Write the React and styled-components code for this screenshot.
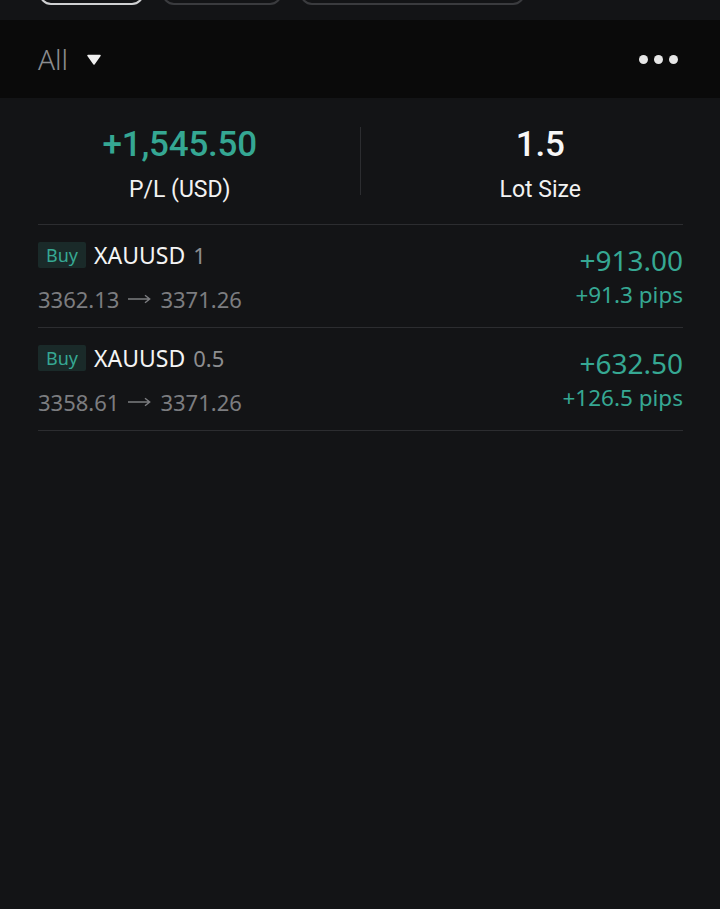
import React from "react";
import styled, { createGlobalStyle } from "styled-components";

const GlobalStyle = createGlobalStyle`
  html, body {
    margin: 0;
    padding: 0;
    background: #131416;
  }
  body {
    font-family: Roboto, "Noto Sans", sans-serif;
  }
`;

const Page = styled.div`
  width: 720px;
  min-height: 909px;
  background: #131416;
  color: #f2f2f2;
`;

const TabStrip = styled.div`
  height: 20px;
  display: flex;
  gap: 18px;
  padding: 0 39px;
  overflow: hidden;
`;

const Tab = styled.div`
  width: ${(p) => p.w}px;
  height: 24px;
  margin-top: -19px;
  border: 2px solid ${(p) => (p.active ? "#cfd0d2" : "#3a3b3e")};
  border-radius: 12px;
  box-sizing: border-box;
`;

const FilterBar = styled.div`
  height: 78px;
  background: #0a0a0a;
  display: flex;
  align-items: center;
  justify-content: space-between;
  padding: 0 42px 0 38px;
`;

const FilterLabel = styled.div`
  display: flex;
  align-items: center;
  gap: 19px;
  color: #8b8c8e;
  font-family: "Noto Sans", sans-serif;
  font-size: 28px;
  font-weight: 300;
`;

const Dots = styled.div`
  display: flex;
  gap: 6px;
  span {
    width: 9px;
    height: 9px;
    border-radius: 50%;
    background: #e6e6e6;
  }
`;

const Summary = styled.div`
  display: grid;
  grid-template-columns: 1fr 1px 1fr;
  align-items: start;
  padding: 28px 0 20px;
`;

const Stat = styled.div`
  display: flex;
  flex-direction: column;
  align-items: center;
  gap: 12px;
`;

const StatValue = styled.div`
  font-size: 35px;
  font-weight: 500;
  line-height: 38px;
  letter-spacing: -0.2px;
  color: ${(p) => (p.green ? "#35a793" : "#f7f7f7")};
`;

const StatLabel = styled.div`
  font-size: 23px;
  line-height: 28px;
  color: #f2f2f2;
`;

const VDivider = styled.div`
  width: 1px;
  height: 68px;
  margin-top: 1px;
  background: #2c2d30;
`;

const List = styled.div`
  margin: 0 37px 0 38px;
  border-top: 1px solid #2c2d30;
  font-family: "Noto Sans", sans-serif;
`;

const Row = styled.div`
  display: flex;
  justify-content: space-between;
  align-items: flex-start;
  padding: 17px 0 15px;
  border-bottom: 1px solid #2c2d30;
`;

const Left = styled.div`
  display: flex;
  flex-direction: column;
  gap: 18px;
`;

const Title = styled.div`
  display: flex;
  align-items: center;
  gap: 8px;
  font-size: 23px;
  line-height: 26px;
`;

const Badge = styled.span`
  background: #1a2a29;
  color: #36a893;
  font-size: 18px;
  line-height: 26px;
  padding: 0 8px;
  border-radius: 2px;
`;

const Symbol = styled.span`
  color: #f4f4f4;
`;

const Size = styled.span`
  color: #8d8e90;
  font-size: 22px;
`;

const Prices = styled.div`
  display: flex;
  align-items: center;
  gap: 9px;
  color: #7c7d80;
  font-size: 22px;
  line-height: 26px;
`;

const Right = styled.div`
  display: flex;
  flex-direction: column;
  align-items: flex-end;
  gap: 5px;
  padding-top: 2px;
`;

const Profit = styled.div`
  color: #36a893;
  font-size: 28px;
  line-height: 32px;
`;

const Pips = styled.div`
  color: #36a893;
  font-size: 22.5px;
  line-height: 28px;
`;

const trades = [
  { size: "1", open: "3362.13", close: "3371.26", profit: "+913.00", pips: "+91.3 pips" },
  { size: "0.5", open: "3358.61", close: "3371.26", profit: "+632.50", pips: "+126.5 pips" },
];

const Arrow = () => (
  <svg width="23" height="10" viewBox="0 0 23 10">
    <path d="M0 5 H21.5 M17 1.2 L21.7 5 L17 8.8" fill="none" stroke="#7c7d80" strokeWidth="1.4" />
  </svg>
);

export default function App() {
  return (
    <Page>
      <GlobalStyle />
      <TabStrip>
        <Tab w={105} active />
        <Tab w={120} />
        <Tab w={225} />
      </TabStrip>
      <FilterBar>
        <FilterLabel>
          All
          <svg width="14" height="11" viewBox="0 0 14 11">
            <path d="M1 1.5 H13 L7 10 Z" fill="#f0f0f0" stroke="#f0f0f0" strokeWidth="1.5" strokeLinejoin="round" />
          </svg>
        </FilterLabel>
        <Dots>
          <span />
          <span />
          <span />
        </Dots>
      </FilterBar>
      <Summary>
        <Stat>
          <StatValue green>+1,545.50</StatValue>
          <StatLabel>P/L (USD)</StatLabel>
        </Stat>
        <VDivider />
        <Stat>
          <StatValue>1.5</StatValue>
          <StatLabel>Lot Size</StatLabel>
        </Stat>
      </Summary>
      <List>
        {trades.map((t, i) => (
          <Row key={i}>
            <Left>
              <Title>
                <Badge>Buy</Badge>
                <Symbol>XAUUSD</Symbol>
                <Size>{t.size}</Size>
              </Title>
              <Prices>
                {t.open}
                <Arrow />
                {t.close}
              </Prices>
            </Left>
            <Right>
              <Profit>{t.profit}</Profit>
              <Pips>{t.pips}</Pips>
            </Right>
          </Row>
        ))}
      </List>
    </Page>
  );
}
